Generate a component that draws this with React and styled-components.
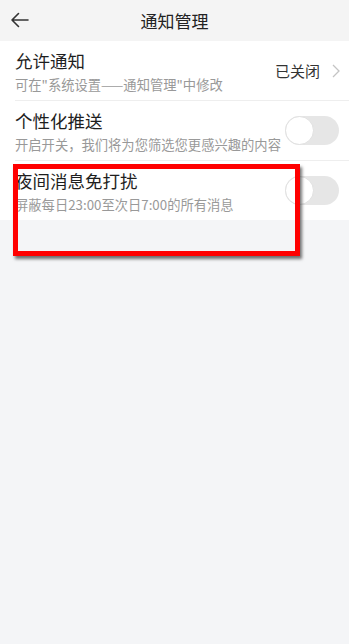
import React from 'react'
import styled, { createGlobalStyle } from 'styled-components'

const rows = [
  { title: '允许通知', desc: '可在"系统设置——通知管理"中修改', value: '已关闭' },
  { title: '个性化推送', desc: '开启开关，我们将为您筛选您更感兴趣的内容', toggle: true },
  { title: '夜间消息免打扰', desc: '屏蔽每日23:00至次日7:00的所有消息', toggle: true },
]

const App = () => (
  <Page>
    <GlobalStyle />
    <Header>
      <Back>
        <svg width="19" height="16" viewBox="0 0 19 16" fill="none">
          <path d="M18 8H2M8.5 1.5L2 8l6.5 6.5" stroke="#333" strokeWidth="1.6" strokeLinecap="round" strokeLinejoin="round" />
        </svg>
      </Back>
      <HeaderTitle>通知管理</HeaderTitle>
    </Header>
    <List>
      {rows.map((row, i) => (
        <Row key={row.title} last={i === rows.length - 1}>
          <Text>
            <Title>{row.title}</Title>
            <Desc>{row.desc}</Desc>
          </Text>
          {row.toggle ? (
            <Switch>
              <Knob />
            </Switch>
          ) : (
            <Value>
              {row.value}
              <svg width="8" height="14" viewBox="0 0 8 14" fill="none">
                <path d="M1 1l6 6-6 6" stroke="#c4c4c4" strokeWidth="1.3" />
              </svg>
            </Value>
          )}
        </Row>
      ))}
    </List>
    <Mark />
  </Page>
)

export default App

const GlobalStyle = createGlobalStyle`
  body {
    margin: 0;
    background: #f4f5f7;
    font-family: "Noto Sans CJK SC", "Noto Sans", sans-serif;
  }
`

const Page = styled.div`
  position: relative;
  min-height: 644px;
  background: #f4f5f7;
`

const Header = styled.header`
  height: 41px;
  display: flex;
  align-items: center;
  justify-content: center;
  position: relative;
  background: #f4f4f4;
`

const Back = styled.span`
  position: absolute;
  left: 10px;
  top: 12px;
  display: flex;
`

const HeaderTitle = styled.h1`
  margin: 0;
  font-size: 17px;
  font-weight: 400;
  color: #222;
`

const List = styled.div`
  background: #fff;
`

const Row = styled.div`
  height: 59px;
  margin-left: 15px;
  padding-right: 10px;
  display: flex;
  align-items: center;
  justify-content: space-between;
  border-bottom: ${(p) => (p.last ? 'none' : '1px solid #eeeeee')};
`

const Text = styled.div`
  display: flex;
  flex-direction: column;
  padding-top: 2px;
`

const Title = styled.div`
  font-size: 17.5px;
  line-height: 22px;
  color: #1e1e1e;
`

const Desc = styled.div`
  margin-top: 4px;
  font-size: 13.3px;
  line-height: 18px;
  color: #999;
`

const Value = styled.div`
  display: flex;
  align-items: center;
  gap: 12px;
  font-size: 15px;
  color: #333;
  margin-right: -1px;
`

const Switch = styled.div`
  width: 54px;
  height: 29px;
  border-radius: 15px;
  background: #e6e6e6;
  position: relative;
`

const Knob = styled.div`
  position: absolute;
  left: 0;
  top: 0;
  width: 27px;
  height: 27px;
  border-radius: 50%;
  background: #fff;
  border: 1px solid #e0e0e0;
`

const Mark = styled.div`
  position: absolute;
  left: 13px;
  top: 164px;
  width: 287px;
  height: 92px;
  box-sizing: border-box;
  border: 5px solid #f00;
  box-shadow: 2px 3px 3px rgba(0, 0, 0, 0.55);
`
